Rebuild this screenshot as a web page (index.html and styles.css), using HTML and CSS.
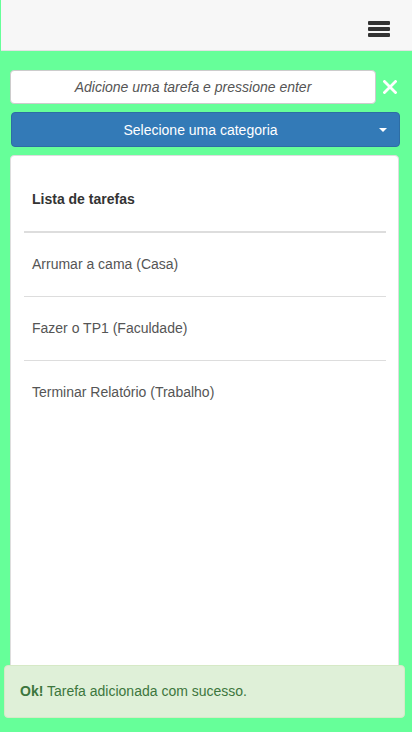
FILE: index.html
```html
<!DOCTYPE html>
<html lang="pt">
<head>
<meta charset="utf-8">
<title>Lista de tarefas</title>
<link rel="stylesheet" href="styles.css">
</head>
<body>
<header class="navbar">
  <button class="menu-toggle" aria-label="Menu">
    <span class="bar"></span><span class="bar"></span><span class="bar"></span>
  </button>
</header>
<main class="content">
  <div class="add-row">
    <input class="task-input" type="text" placeholder="Adicione uma tarefa e pressione enter">
    <button class="clear-btn" aria-label="Limpar">
      <svg width="14" height="14" viewBox="0 0 14 14"><path d="M1.5 1.5 L12.5 12.5 M12.5 1.5 L1.5 12.5" stroke="#fff" stroke-width="2.8" stroke-linecap="square" fill="none"/></svg>
    </button>
  </div>
  <button class="category-btn">Selecione uma categoria<span class="caret"></span></button>
  <section class="card">
    <ul class="task-list">
      <li class="task-head">Lista de tarefas</li>
      <li class="task">Arrumar a cama (Casa)</li>
      <li class="task">Fazer o TP1 (Faculdade)</li>
      <li class="task">Terminar Relatório (Trabalho)</li>
    </ul>
  </section>
</main>
<div class="alert"><strong>Ok!</strong> Tarefa adicionada com sucesso.</div>
</body>
</html>
```
FILE: styles.css
```css
* { box-sizing: border-box; }
html, body { margin: 0; padding: 0; }
body {
  background: #66ff99;
  font-family: "Liberation Sans", Arial, sans-serif;
  font-size: 14px;
  line-height: 20px;
  color: #333;
  height: 732px;
  overflow: hidden;
}
.navbar {
  height: 51px;
  margin-left: 1px;
  background: #f7f7f7;
  border-bottom: 1px solid #e3e3e3;
  display: flex;
  justify-content: flex-end;
  align-items: flex-start;
  padding: 21px 22px 0 0;
}
.menu-toggle {
  border: 0;
  background: none;
  padding: 0;
  width: 22px;
  display: flex;
  flex-direction: column;
  gap: 2px;
}
.bar {
  display: block;
  width: 22px;
  height: 4px;
  background: #333;
  border-radius: 1px;
}
.content {
  padding: 19px 0 0 10px;
}
.add-row {
  display: flex;
  align-items: center;
  gap: 7px;
}
.task-input {
  width: 366px;
  height: 34px;
  border: 1px solid #ccc;
  border-radius: 4px;
  background: #fff;
  font-family: "Liberation Sans", Arial, sans-serif;
  font-size: 14px;
  text-align: center;
  padding: 6px 12px;
  outline: none;
}
.task-input::placeholder {
  color: #555;
  font-style: italic;
  opacity: 1;
}
.clear-btn {
  border: 0;
  background: none;
  padding: 0;
  width: 14px;
  height: 14px;
  display: flex;
}
.category-btn {
  display: flex;
  align-items: center;
  justify-content: center;
  position: relative;
  margin: 8px 0 0 1px;
  width: 389px;
  height: 35px;
  background: #337ab7;
  border: 1px solid #2e6da4;
  border-radius: 4px;
  color: #fff;
  font-family: "Liberation Sans", Arial, sans-serif;
  font-size: 14px;
  padding: 0 10px 0 0;
}
.caret {
  position: absolute;
  right: 12px;
  top: 15px;
  width: 0;
  height: 0;
  border-top: 4px solid #fff;
  border-left: 4px solid transparent;
  border-right: 4px solid transparent;
}
.card {
  margin-top: 8px;
  width: 389px;
  height: 550px;
  background: #fff;
  border: 1px solid #ddd;
  border-radius: 4px;
  padding: 12px 12px 0 13px;
}
.task-list {
  list-style: none;
  margin: 0;
  padding: 0;
}
.task-list li {
  padding: 21px 8px 22px;
  border-bottom: 1px solid #ddd;
  color: #555;
}
.task-list li:last-child { border-bottom: 0; }
.task-list .task-head {
  font-weight: bold;
  color: #333;
  border-bottom: 2px solid #ddd;
}
.alert {
  position: fixed;
  left: 4px;
  right: 7px;
  bottom: 14px;
  height: 53px;
  background: #dff0d8;
  border: 1px solid #d6e9c6;
  border-radius: 4px;
  color: #3c763d;
  padding: 15px 15px 16px;
}
.alert strong { font-weight: bold; }
```
